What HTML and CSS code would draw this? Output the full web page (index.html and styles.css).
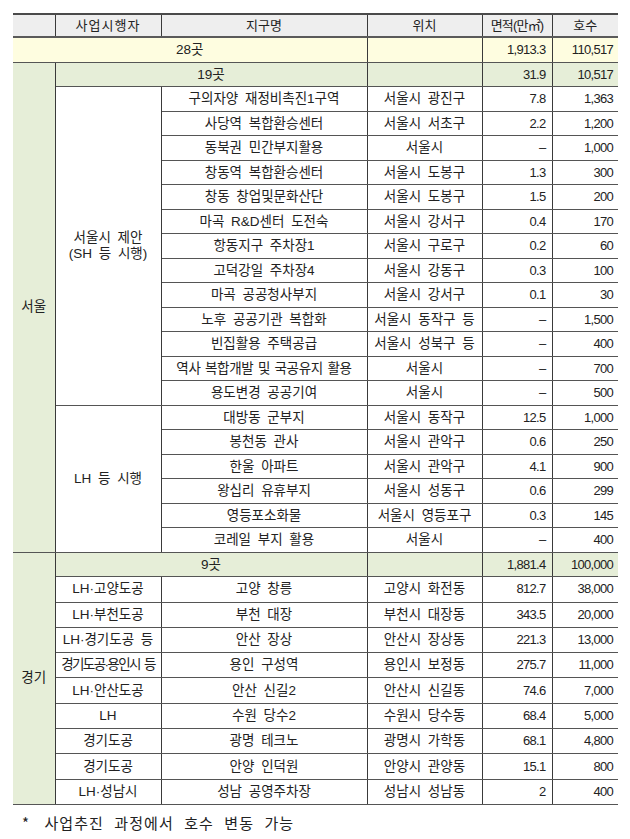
FILE: index.html
```html
<!DOCTYPE html>
<html lang="ko">
<head>
<meta charset="utf-8">
<title>공급 대상지</title>
<link rel="stylesheet" href="styles.css">
</head>
<body>
<div class="page">
<table class="tbl">
<colgroup>
<col class="c-region"><col class="c-org"><col class="c-name"><col class="c-loc"><col class="c-area"><col class="c-units">
</colgroup>
<thead>
<tr class="hd">
<th></th><th class="spaced">사업시행자</th><th>지구명</th><th>위치</th><th class="tight">면적(만㎡)</th><th>호수</th>
</tr>
</thead>
<tbody>
<tr class="total"><td colspan="3">28곳</td><td></td><td class="num a">1,913.3</td><td class="num u">110,517</td></tr>

<tr class="sub"><td rowspan="20" class="region">서울</td><td colspan="2">19곳</td><td></td><td class="num a">31.9</td><td class="num u">10,517</td></tr>
<tr class="s"><td rowspan="13">서울시 제안<br>(SH 등 시행)</td><td>구의자양 재정비촉진1구역</td><td>서울시 광진구</td><td class="num a">7.8</td><td class="num u">1,363</td></tr>
<tr class="s"><td>사당역 복합환승센터</td><td>서울시 서초구</td><td class="num a">2.2</td><td class="num u">1,200</td></tr>
<tr class="s"><td>동북권 민간부지활용</td><td>서울시</td><td class="num a">–</td><td class="num u">1,000</td></tr>
<tr class="s"><td>창동역 복합환승센터</td><td>서울시 도봉구</td><td class="num a">1.3</td><td class="num u">300</td></tr>
<tr class="s"><td>창동 창업및문화산단</td><td>서울시 도봉구</td><td class="num a">1.5</td><td class="num u">200</td></tr>
<tr class="s"><td>마곡 R&amp;D센터 도전숙</td><td>서울시 강서구</td><td class="num a">0.4</td><td class="num u">170</td></tr>
<tr class="s"><td>항동지구 주차장1</td><td>서울시 구로구</td><td class="num a">0.2</td><td class="num u">60</td></tr>
<tr class="s"><td>고덕강일 주차장4</td><td>서울시 강동구</td><td class="num a">0.3</td><td class="num u">100</td></tr>
<tr class="s"><td>마곡 공공청사부지</td><td>서울시 강서구</td><td class="num a">0.1</td><td class="num u">30</td></tr>
<tr class="s"><td>노후 공공기관 복합화</td><td>서울시 동작구 등</td><td class="num a">–</td><td class="num u">1,500</td></tr>
<tr class="s"><td>빈집활용 주택공급</td><td>서울시 성북구 등</td><td class="num a">–</td><td class="num u">400</td></tr>
<tr class="s"><td class="long">역사 복합개발 및 국공유지 활용</td><td>서울시</td><td class="num a">–</td><td class="num u">700</td></tr>
<tr class="s"><td>용도변경 공공기여</td><td>서울시</td><td class="num a">–</td><td class="num u">500</td></tr>
<tr class="s"><td rowspan="6">LH 등 시행</td><td>대방동 군부지</td><td>서울시 동작구</td><td class="num a">12.5</td><td class="num u">1,000</td></tr>
<tr class="s"><td>봉천동 관사</td><td>서울시 관악구</td><td class="num a">0.6</td><td class="num u">250</td></tr>
<tr class="s"><td>한울 아파트</td><td>서울시 관악구</td><td class="num a">4.1</td><td class="num u">900</td></tr>
<tr class="s"><td>왕십리 유휴부지</td><td>서울시 성동구</td><td class="num a">0.6</td><td class="num u">299</td></tr>
<tr class="s"><td>영등포소화물</td><td>서울시 영등포구</td><td class="num a">0.3</td><td class="num u">145</td></tr>
<tr class="s"><td>코레일 부지 활용</td><td>서울시</td><td class="num a">–</td><td class="num u">400</td></tr>

<tr class="sub g-start"><td rowspan="10" class="region">경기</td><td colspan="2">9곳</td><td></td><td class="num a">1,881.4</td><td class="num u">100,000</td></tr>
<tr class="g"><td>LH·고양도공</td><td>고양 창릉</td><td>고양시 화전동</td><td class="num a">812.7</td><td class="num u">38,000</td></tr>
<tr class="g"><td>LH·부천도공</td><td>부천 대장</td><td>부천시 대장동</td><td class="num a">343.5</td><td class="num u">20,000</td></tr>
<tr class="g"><td>LH·경기도공 등</td><td>안산 장상</td><td>안산시 장상동</td><td class="num a">221.3</td><td class="num u">13,000</td></tr>
<tr class="g"><td class="squeeze">경기도공·용인시 등</td><td>용인 구성역</td><td>용인시 보정동</td><td class="num a">275.7</td><td class="num u">11,000</td></tr>
<tr class="g"><td>LH·안산도공</td><td>안산 신길2</td><td>안산시 신길동</td><td class="num a">74.6</td><td class="num u">7,000</td></tr>
<tr class="g"><td>LH</td><td>수원 당수2</td><td>수원시 당수동</td><td class="num a">68.4</td><td class="num u">5,000</td></tr>
<tr class="g"><td>경기도공</td><td>광명 테크노</td><td>광명시 가학동</td><td class="num a">68.1</td><td class="num u">4,800</td></tr>
<tr class="g"><td>경기도공</td><td>안양 인덕원</td><td>안양시 관양동</td><td class="num a">15.1</td><td class="num u">800</td></tr>
<tr class="g last"><td>LH·성남시</td><td>성남 공영주차장</td><td>성남시 성남동</td><td class="num a">2</td><td class="num u">400</td></tr>
</tbody>
</table>
<p class="note"><span class="star">*</span> 사업추진 과정에서 호수 변동 가능</p>
</div>
</body>
</html>
```

FILE: styles.css
```css
html, body {
  margin: 0;
  padding: 0;
  background: #ffffff;
}

body {
  font-family: "Liberation Sans", "Noto Sans CJK KR", sans-serif;
  color: #222222;
}

.page {
  padding: 13px 0 0 13px;
}

.tbl {
  border-collapse: collapse;
  table-layout: fixed;
  width: 605px;
  font-size: 13.5px;
  line-height: 16px;
  word-spacing: 3px;
}

.c-region { width: 42px; }
.c-org { width: 106px; }
.c-name { width: 206px; }
.c-loc { width: 115px; }
.c-area { width: 70px; }
.c-units { width: 66px; }

.tbl th,
.tbl td {
  padding: 0 4px;
  text-align: center;
  vertical-align: middle;
  border: 1px solid #3a3a3a;
  border-top-color: #555555;
  border-bottom-color: #555555;
  white-space: nowrap;
  overflow: hidden;
}

.tbl tr > :first-child {
  border-left: none;
}

.tbl tr > :last-child {
  border-right: none;
}

.hd th {
  font-weight: normal;
  font-size: 13px;
  background: #eeeeee;
  height: 21px;
  border-top: 2px solid #4a4a4a;
  border-bottom: 2px solid #5a5a5a;
}

.hd .spaced {
  letter-spacing: 1px;
}

.hd .tight {
  letter-spacing: -0.8px;
  word-spacing: 0;
}

.total td {
  background: #fefde0;
  height: 24px;
}

.sub td {
  background: #e6eed8;
  height: 23.4px;
}

.region {
  background: #e6eed8;
  border-bottom: 1px solid #555555;
}

.s td {
  height: 23.5px;
}

.g td {
  height: 24.3px;
}

.num {
  font-family: "Liberation Sans", sans-serif;
  font-size: 13px;
  letter-spacing: -0.7px;
  word-spacing: 0;
}

.num.a {
  text-align: right;
  padding-right: 6px;
}

.num.u {
  text-align: right;
  padding-right: 5px;
}

.long {
  letter-spacing: -0.3px;
  word-spacing: 1px;
}

.squeeze {
  letter-spacing: -1.6px;
  word-spacing: 2px;
}

.g-start td {
  border-top: 1px solid #3a3a3a;
}

.note {
  margin: 8px 0 0 9px;
  font-family: "Noto Sans CJK KR", sans-serif;
  font-size: 15px;
  line-height: 20px;
  letter-spacing: 1.1px;
  word-spacing: 5px;
  color: #222222;
}

.star {
  margin-right: 4px;
}
```
